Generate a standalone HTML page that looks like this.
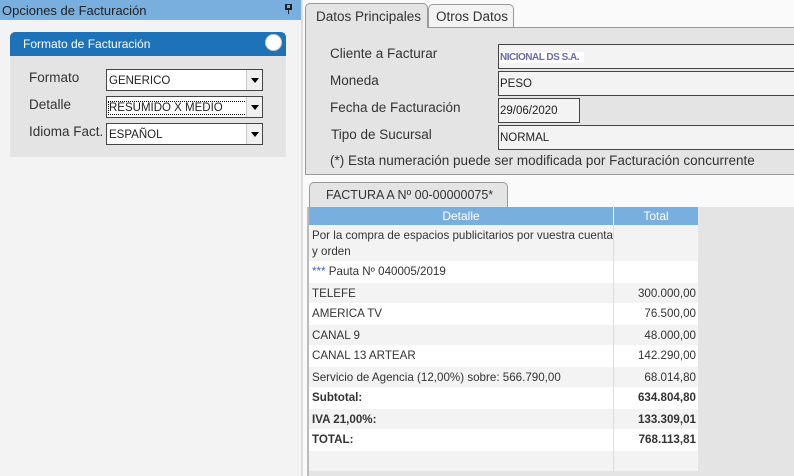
<!DOCTYPE html>
<html><head><meta charset="utf-8"><style>
*{margin:0;padding:0;box-sizing:border-box}
body{width:794px;height:476px;overflow:hidden;background:#f3f3f3;font-family:"Liberation Sans",sans-serif;color:#333;position:relative}
.a{position:absolute;white-space:nowrap}
.lbl{font-size:13.5px;color:#333}
.inp{position:absolute;background:#f3f3f3;border:1px solid #444;font-size:11.5px;padding:6px 0 0 1px;color:#222}
.sel{position:absolute;left:106px;width:157px;height:22px;background:#fff;border:1px solid #444;font-size:11.5px;padding:5px 2px 0;color:#222}
.sel .b{position:absolute;right:0;top:0;width:16px;height:20px;background:#f0f0f0;border-left:1px solid #ccc}
.sel .b:after{content:"";position:absolute;left:4px;top:8px;border-left:4px solid transparent;border-right:4px solid transparent;border-top:5px solid #000}
.row{position:absolute;left:309px;width:389px;font-size:11.6px;color:#333}
.row .d{position:absolute;left:3px;top:4px;white-space:nowrap}
.row .t{position:absolute;right:2px;top:4px;width:80px;text-align:right}
</style></head><body>
<div class="a" style="left:0;top:0;width:301px;height:476px;background:#f3f3f3"></div>
<div class="a" style="left:0;top:0;width:301px;height:20px;background:#79afde;font-size:13px;padding:3px 2px;color:#222">Opciones de Facturación</div>
<div class="a" style="left:285px;top:4px;width:7px;height:6px;border:2px solid #222;border-top-width:1px"></div>
<div class="a" style="left:288px;top:10px;width:1px;height:4px;background:#222"></div>
<div class="a" style="left:301px;top:0;width:2px;height:476px;background:#ddd"></div>
<div class="a" style="left:10px;top:32px;width:276px;height:125px;background:#e4e4e4;border-radius:5px 5px 0 0"></div>
<div class="a" style="left:10px;top:32px;width:276px;height:24px;background:#1e73b8;border-radius:5px 5px 0 0;color:#fff;font-size:12px;padding:5px 13px">Formato de Facturación</div>
<div class="a" style="left:265px;top:34px;width:17px;height:17px;border-radius:50%;background:#fff;border:1px solid #ccc"></div>
<div class="a lbl" style="left:29px;top:70px">Formato</div>
<div class="a lbl" style="left:29px;top:97px">Detalle</div>
<div class="a lbl" style="left:29px;top:124px">Idioma Fact.</div>
<div class="sel" style="top:69px">GENERICO<div class="b"></div></div>
<div class="sel" style="top:96px"><span style="outline:1px dotted #000">RESUMIDO X MEDIO&nbsp;&nbsp;&nbsp;&nbsp;&nbsp;&nbsp;&nbsp;&nbsp;&nbsp;</span><div class="b"></div></div>
<div class="sel" style="top:123px">ESPAÑOL<div class="b"></div></div>

<div class="a" style="left:303px;top:0;width:491px;height:476px;background:#fafafa"></div>
<div class="a" style="left:305px;top:27px;width:489px;height:148px;background:#e4e4e4;border:1px solid #999;border-right:none"></div>
<div class="a" style="left:305px;top:3px;width:123px;height:25px;background:#e4e4e4;border:1px solid #999;border-bottom:none;border-radius:5px 5px 0 0;font-size:13.5px;padding:5px 10px">Datos Principales</div>
<div class="a" style="left:428px;top:4px;width:86px;height:23px;background:#f3f3f3;border:1px solid #999;border-bottom:none;border-radius:5px 5px 0 0;font-size:13.5px;padding:4px 7px">Otros Datos</div>
<div class="a lbl" style="left:330px;top:46px">Cliente a Facturar</div>
<div class="a lbl" style="left:330px;top:73px">Moneda</div>
<div class="a lbl" style="left:330px;top:100px">Fecha de Facturación</div>
<div class="a lbl" style="left:331px;top:127px">Tipo de Sucursal</div>
<div class="a lbl" style="left:330px;top:153px">(*) Esta numeración puede ser modificada por Facturación concurrente</div>
<div class="inp" style="left:498px;top:44px;width:300px;height:25px"><span style="background:#fff;color:#6a6aa8;letter-spacing:-0.5px;font-size:10px;font-weight:bold">NICIONAL DS S.A.&nbsp;&nbsp;</span></div>
<div class="inp" style="left:498px;top:71px;width:300px;height:25px">PESO</div>
<div class="inp" style="left:498px;top:98px;width:82px;height:25px">29/06/2020</div>
<div class="inp" style="left:498px;top:125px;width:300px;height:25px">NORMAL</div>

<div class="a" style="left:307px;top:207px;width:487px;height:269px;background:#e4e4e4;border-left:2px solid #bbb"></div>
<div class="a" style="left:309px;top:182px;width:199px;height:26px;background:#e4e4e4;border:1px solid #999;border-bottom:none;border-radius:5px 5px 0 0;font-size:12.5px;padding:5px 16px">FACTURA A Nº 00-00000075*</div>
<div class="a" style="left:309px;top:207px;width:389px;height:264px;background:#f3f3f3"></div>
<div class="a" style="left:309px;top:207px;width:304px;height:18px;background:#79afde;color:#fff;font-size:12px;text-align:center;padding-top:2px">Detalle</div>
<div class="a" style="left:614px;top:207px;width:84px;height:18px;background:#79afde;color:#fff;font-size:12px;text-align:center;padding-top:2px">Total</div>
<div class="row" style="top:225px;height:36px;background:#f3f3f3"><span class="d" style="top:3px;line-height:16px">Por la compra de espacios publicitarios por vuestra cuenta<br>y orden</span></div>
<div class="row" style="top:261px;height:22px;background:#fff"><span class="d"><span style="color:#36c">***</span> Pauta Nº 040005/2019</span></div>
<div class="row" style="top:283px;height:20px;background:#f3f3f3"><span class="d">TELEFE</span><span class="t">300.000,00</span></div>
<div class="row" style="top:303px;height:22px;background:#fff"><span class="d">AMERICA TV</span><span class="t">76.500,00</span></div>
<div class="row" style="top:325px;height:20px;background:#f3f3f3"><span class="d">CANAL 9</span><span class="t">48.000,00</span></div>
<div class="row" style="top:345px;height:22px;background:#fff"><span class="d">CANAL 13 ARTEAR</span><span class="t">142.290,00</span></div>
<div class="row" style="top:367px;height:20px;background:#f3f3f3"><span class="d">Servicio de Agencia (12,00%) sobre: 566.790,00</span><span class="t">68.014,80</span></div>
<div class="row" style="top:387px;height:22px;background:#fff;font-weight:bold"><span class="d">Subtotal:</span><span class="t">634.804,80</span></div>
<div class="row" style="top:409px;height:20px;background:#f3f3f3;font-weight:bold"><span class="d">IVA 21,00%:</span><span class="t">133.309,01</span></div>
<div class="row" style="top:429px;height:22px;background:#fff;font-weight:bold"><span class="d">TOTAL:</span><span class="t">768.113,81</span></div>
<div class="a" style="left:613px;top:225px;width:1px;height:246px;background:#ddd"></div>
</body></html>
